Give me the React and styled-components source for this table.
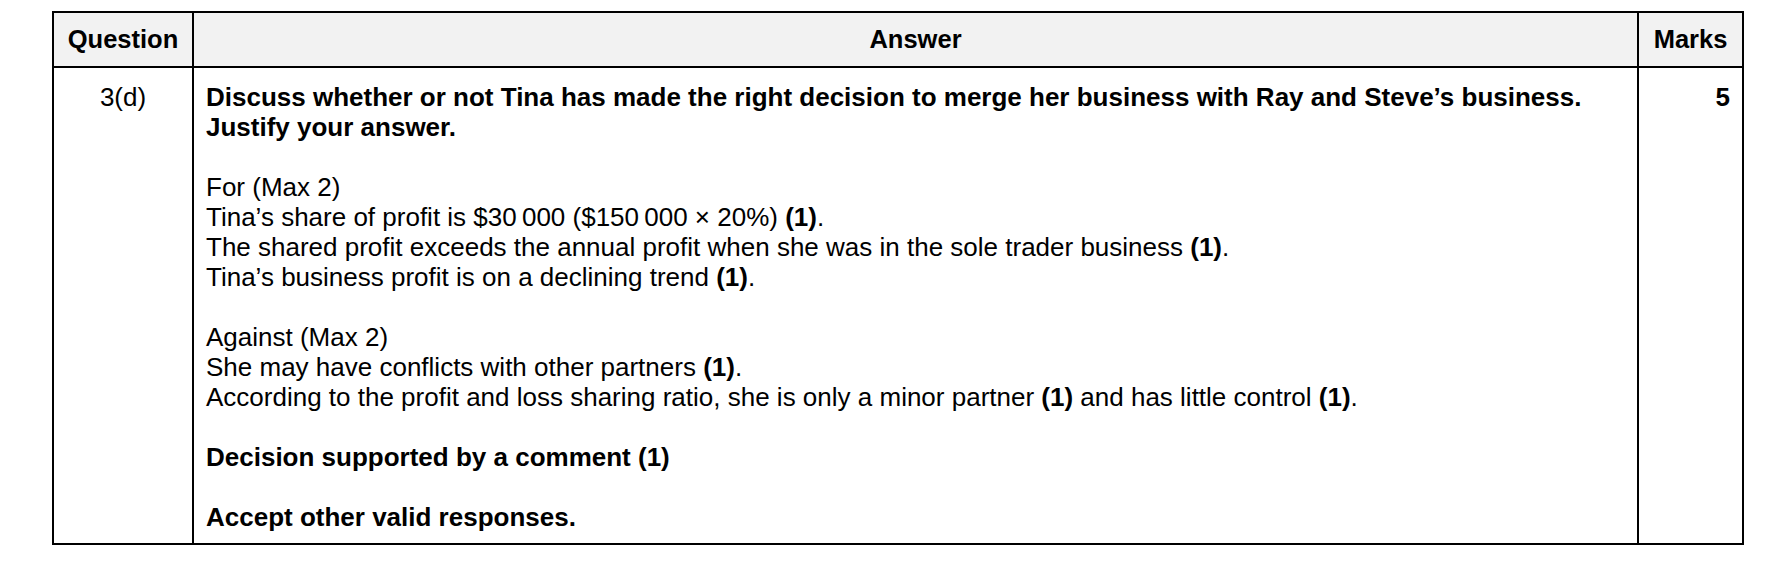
import React from 'react';
import styled, { createGlobalStyle } from 'styled-components';

const GlobalStyle = createGlobalStyle`
    body {
        margin: 0;
        background: #ffffff;
        font-family: "Liberation Sans", Arial, sans-serif;
        color: #000000;
    }
`;

const Page = styled.div`
    padding: 11px 0 0 52px;
`;

const Grid = styled.div`
    display: grid;
    grid-template-columns: 140px 1445px 103px;
    width: 1692px;
    box-sizing: border-box;
    border: 2px solid #000000;
`;

const HeadCell = styled.div`
    height: 53px;
    background: #f2f2f2;
    border-bottom: 2px solid #000000;
    border-right: ${p => (p.last ? 'none' : '2px solid #000000')};
    display: flex;
    align-items: center;
    justify-content: center;
    font-size: 25.5px;
    font-weight: bold;
`;

const Cell = styled.div`
    padding: 14px 12px 11px 12px;
    border-right: ${p => (p.last ? 'none' : '2px solid #000000')};
    text-align: ${p => p.align || 'left'};
    font-size: 26px;
    line-height: 30px;
    font-weight: ${p => (p.bold ? 'bold' : 'normal')};
`;

const Para = styled.p`
    margin: 0 0 30px 0;
    font-weight: ${p => (p.bold ? 'bold' : 'normal')};
    &:last-child {
        margin-bottom: 0;
    }
`;

const Line = styled.span`
    display: block;
`;

const B = styled.b`
    font-weight: bold;
`;

const forPoints = [
    <>Tina’s share of profit is $30{'\u2009'}000 ($150{'\u2009'}000 × 20%) <B>(1)</B>.</>,
    <>The shared profit exceeds the annual profit when she was in the sole trader business <B>(1)</B>.</>,
    <>Tina’s business profit is on a declining trend <B>(1)</B>.</>,
];

const againstPoints = [
    <>She may have conflicts with other partners <B>(1)</B>.</>,
    <>According to the profit and loss sharing ratio, she is only a minor partner <B>(1)</B> and has little control <B>(1)</B>.</>,
];

export default function App() {
    return (
        <Page>
            <GlobalStyle />
            <Grid>
                <HeadCell>Question</HeadCell>
                <HeadCell>Answer</HeadCell>
                <HeadCell last>Marks</HeadCell>

                <Cell align="center">3(d)</Cell>
                <Cell>
                    <Para bold>
                        <Line>Discuss whether or not Tina has made the right decision to merge her business with Ray and Steve’s business.</Line>
                        <Line>Justify your answer.</Line>
                    </Para>
                    <Para>
                        <Line>For (Max 2)</Line>
                        {forPoints.map((item, i) => <Line key={i}>{item}</Line>)}
                    </Para>
                    <Para>
                        <Line>Against (Max 2)</Line>
                        {againstPoints.map((item, i) => <Line key={i}>{item}</Line>)}
                    </Para>
                    <Para bold>Decision supported by a comment (1)</Para>
                    <Para bold>Accept other valid responses.</Para>
                </Cell>
                <Cell align="right" bold last>5</Cell>
            </Grid>
        </Page>
    );
}
